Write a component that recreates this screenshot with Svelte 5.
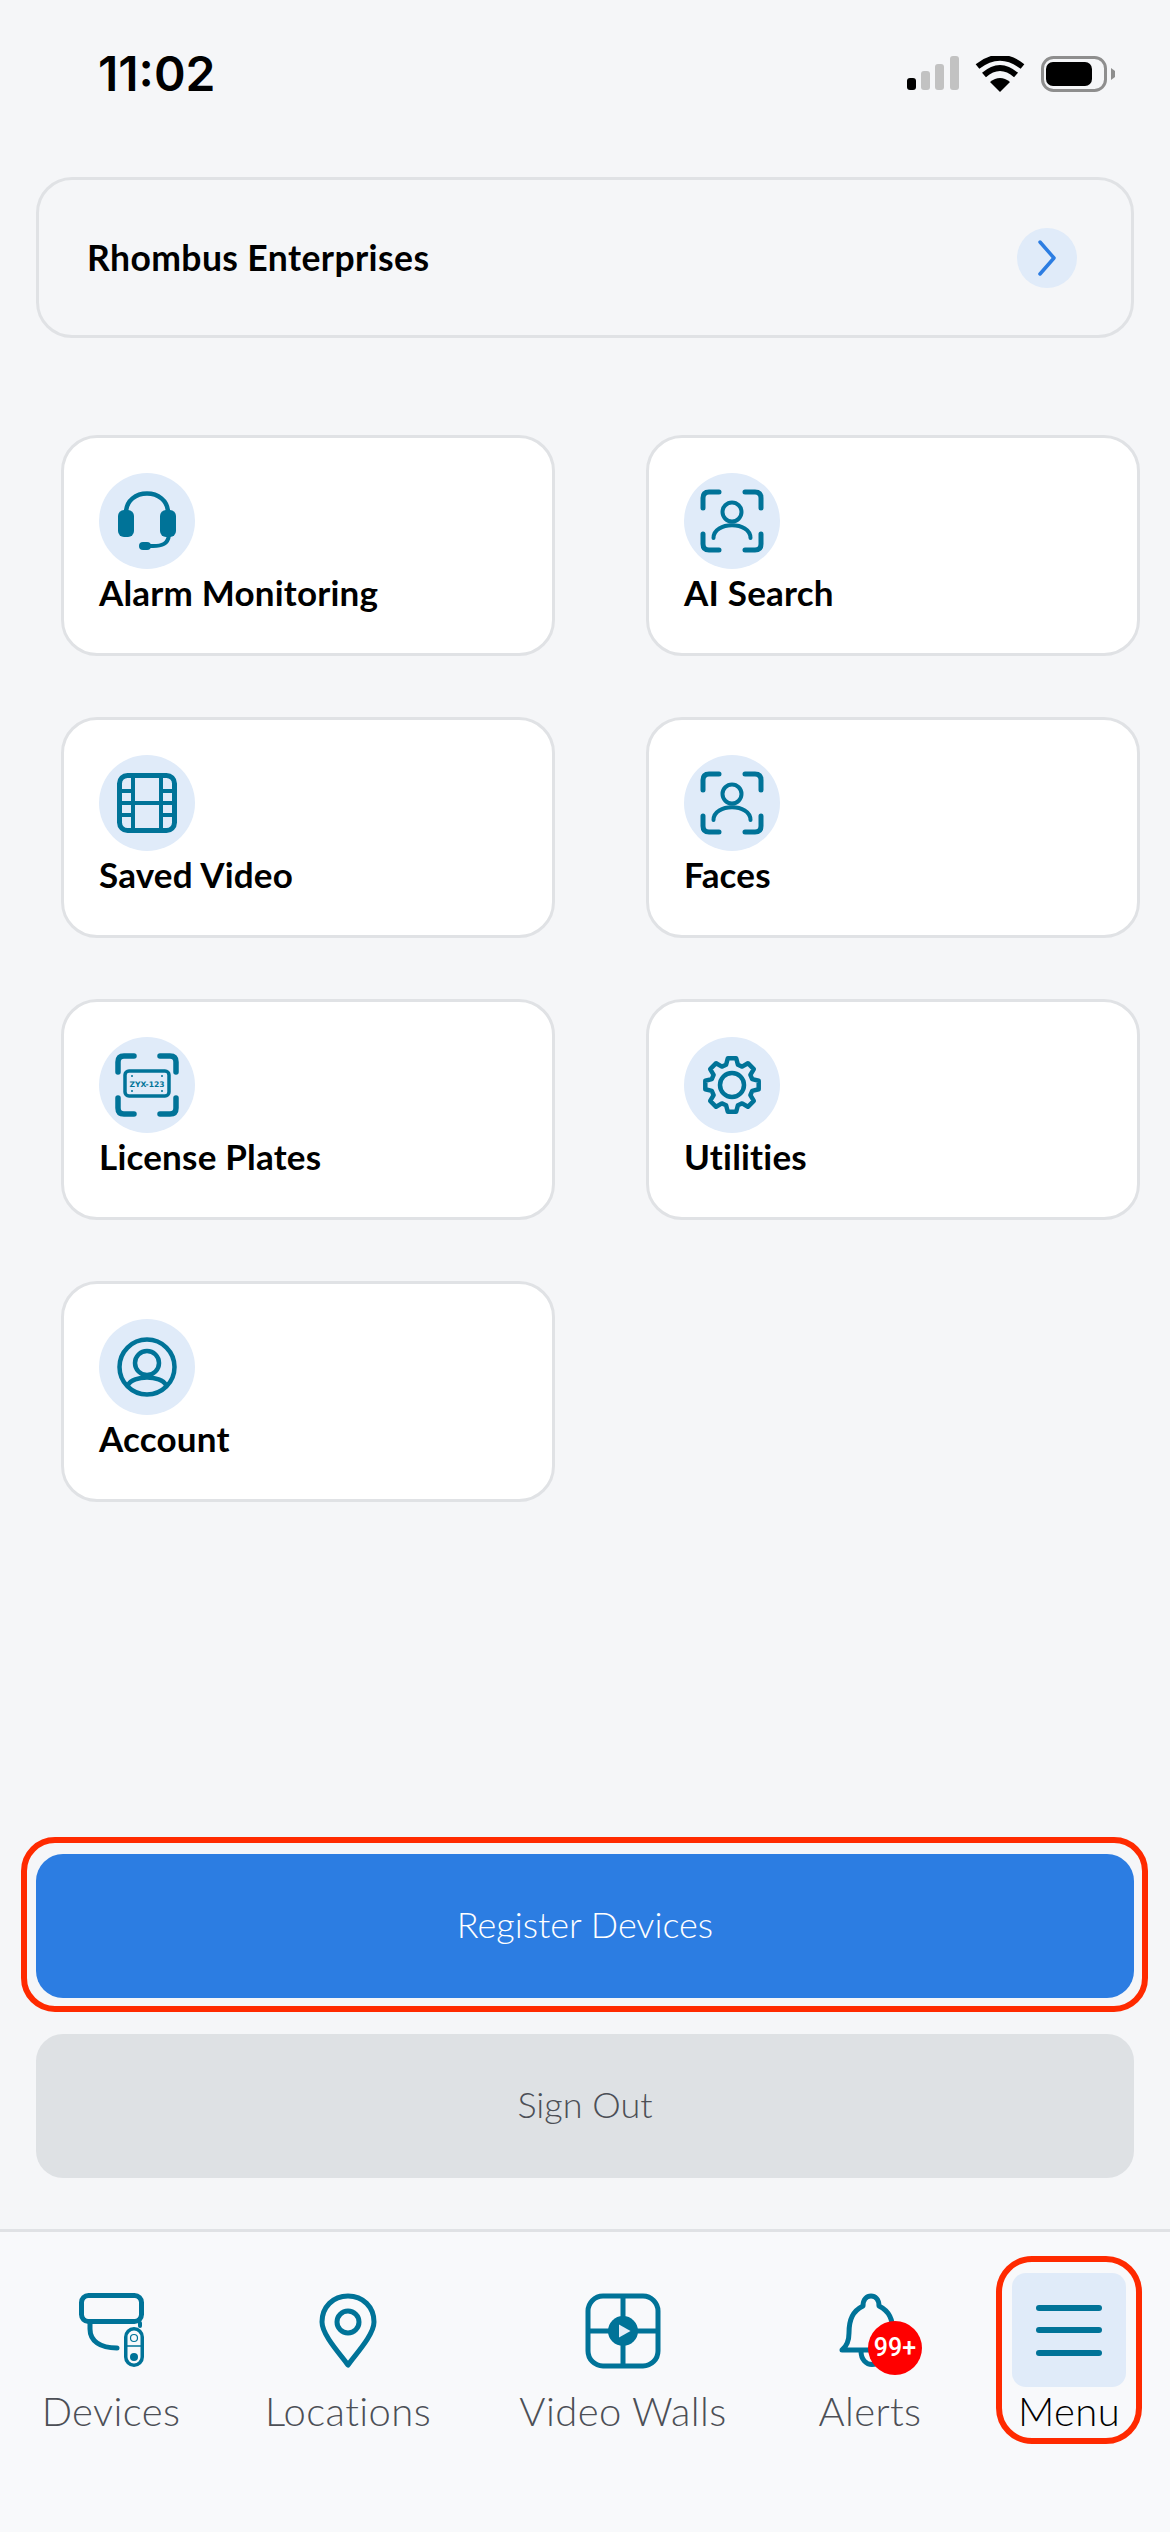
<script>
	const tiles = [
		{ label: 'Alarm Monitoring', icon: 'headset' },
		{ label: 'AI Search', icon: 'face' },
		{ label: 'Saved Video', icon: 'film' },
		{ label: 'Faces', icon: 'face' },
		{ label: 'License Plates', icon: 'plate' },
		{ label: 'Utilities', icon: 'gear' },
		{ label: 'Account', icon: 'account' }
	];

	// gear outline, built once instead of hand-typing eight teeth
	function gearPath(cx, cy, outer, inner, teeth) {
		const step = (Math.PI * 2) / teeth;
		let d = '';
		for (let i = 0; i < teeth; i++) {
			const a = i * step - Math.PI / 2;
			const pts = [
				[inner, a - step * 0.36],
				[outer, a - step * 0.2],
				[outer, a + step * 0.2],
				[inner, a + step * 0.36]
			];
			for (const [r, t] of pts) {
				const x = (cx + r * Math.cos(t)).toFixed(1);
				const y = (cy + r * Math.sin(t)).toFixed(1);
				d += (d ? 'L' : 'M') + x + ' ' + y + ' ';
			}
		}
		return d + 'Z';
	}
</script>

<div class="screen">
	<div class="status">
		<span class="time">11:02</span>
		<div class="status-icons">
			<svg width="52" height="36" viewBox="0 0 52 36">
				<rect x="0" y="22" width="9" height="12" rx="3" fill="#000" />
				<rect x="14" y="15" width="9" height="19" rx="3" fill="#c2c2c2" />
				<rect x="28" y="8" width="9" height="26" rx="3" fill="#c2c2c2" />
				<rect x="43" y="0" width="9" height="34" rx="3" fill="#c2c2c2" />
			</svg>
			<svg width="50" height="37" viewBox="0 0 50 37">
				<path d="M25 36 L15 26 Q25 18 35 26 Z" fill="#000" />
				<path d="M9 19 Q25 5 41 19" fill="none" stroke="#000" stroke-width="6" />
				<path d="M2.5 10.5 Q25 -7 47.5 10.5" fill="none" stroke="#000" stroke-width="6" />
			</svg>
			<svg width="74" height="36" viewBox="0 0 74 36">
				<rect x="1.5" y="1.5" width="63" height="33" rx="11" fill="none" stroke="#8e8e8e" stroke-width="3" />
				<rect x="5" y="6" width="46" height="24" rx="7" fill="#000" />
				<path d="M70 12 L74 15 V21 L70 24 Z" fill="#8e8e8e" />
			</svg>
		</div>
	</div>

	<div class="org">
		<span>Rhombus Enterprises</span>
		<span class="org-chevron">
			<svg width="20" height="36" viewBox="0 0 20 36">
				<path d="M3 2 L17 18 L3 34" fill="none" stroke="#2c7de2" stroke-width="3.5" stroke-linecap="round" stroke-linejoin="round" />
			</svg>
		</span>
	</div>

	<div class="grid">
		{#each tiles as tile}
			<div class="tile">
				<span class="tile-icon">
					<svg width="64" height="64" viewBox="0 0 64 64" fill="none" stroke="#007398" stroke-width="4" stroke-linecap="round" stroke-linejoin="round">
						{#if tile.icon === 'headset'}
							<path d="M11 24 C11 -2 53 -2 53 24" stroke-width="4.5" />
							<rect x="3" y="21" width="16" height="27" rx="6" fill="#007398" stroke="none" />
							<rect x="45" y="21" width="16" height="27" rx="6" fill="#007398" stroke="none" />
							<path d="M54 46 C53 55 47 57 38 57 L27 57" stroke-width="4" />
							<rect x="24" y="53" width="12" height="8" rx="4" fill="#007398" stroke="none" />
						{:else if tile.icon === 'film'}
							<rect x="4.5" y="4.5" width="55" height="55" rx="8" stroke-width="5" />
							<path d="M18 4 V60 M46 4 V60 M18 32 H46 M4 20 H18 M4 32 H18 M4 44 H18 M46 20 H60 M46 32 H60 M46 44 H60" stroke-width="4" stroke-linecap="butt" />
						{:else if tile.icon === 'face'}
							<path d="M3 19 V9 Q3 3 9 3 H19 M45 3 H55 Q61 3 61 9 V19 M3 45 V55 Q3 61 9 61 H19 M45 61 H55 Q61 61 61 55 V45" stroke-width="5" />
							<circle cx="32" cy="23" r="9.5" />
							<path d="M13.5 49 C13.5 32 50.5 32 50.5 49" />
						{:else if tile.icon === 'plate'}
							<path d="M3 19 V9 Q3 3 9 3 H19 M45 3 H55 Q61 3 61 9 V19 M3 45 V55 Q3 61 9 61 H19 M45 61 H55 Q61 61 61 55 V45" stroke-width="5.5" />
							<rect x="10" y="18" width="44" height="25" rx="4" stroke-width="3.5" />
							<text x="32" y="33.5" text-anchor="middle" class="plate-text">ZYX-123</text>
							<g fill="#007398" stroke="none">
								<circle cx="17" cy="23" r="1" />
								<circle cx="47" cy="23" r="1" />
								<circle cx="17" cy="38" r="1" />
								<circle cx="47" cy="38" r="1" />
							</g>
						{:else if tile.icon === 'gear'}
							<path d={gearPath(32, 32, 27, 21, 8)} stroke-width="4.5" />
							<circle cx="32" cy="32" r="12" stroke-width="4.5" />
						{:else if tile.icon === 'account'}
							<circle cx="32" cy="32" r="27.5" stroke-width="4.5" />
							<circle cx="32" cy="28" r="12" stroke-width="4.5" />
							<path d="M13 50 C18 40 46 40 51 50" stroke-width="4.5" />
						{/if}
					</svg>
				</span>
				<span class="tile-label">{tile.label}</span>
			</div>
		{/each}
	</div>

	<div class="actions">
		<button class="btn btn-primary">Register Devices<span class="mark mark-register"></span></button>
		<button class="btn btn-muted">Sign Out</button>
	</div>

	<nav class="tabs">
		<div class="tab">
			<svg class="tab-icon" width="70" height="76" viewBox="0 0 70 76" fill="none" stroke="#007398" stroke-width="5" stroke-linecap="round">
				<rect x="5.5" y="2.5" width="60" height="26" rx="7" />
				<path d="M14 30 V36 C14 48 24 55 41 55" />
				<path d="M64 30 V33" stroke-width="4" />
				<rect x="49.75" y="35.75" width="16.5" height="36.5" rx="8.2" stroke-width="3.5" />
				<path d="M50 53 H66" stroke-width="1.5" />
				<circle cx="58" cy="45" r="3.5" stroke-width="1.2" />
				<circle cx="58" cy="64" r="4" fill="#007398" stroke="none" />
			</svg>
			<span>Devices</span>
		</div>
		<div class="tab">
			<svg class="tab-icon" width="58" height="76" viewBox="0 0 58 76" fill="none" stroke="#007398" stroke-width="5" stroke-linejoin="round">
				<path d="M29 72 C22 62 3 42 3 29 C3 14 14 3 29 3 C44 3 55 14 55 29 C55 42 36 62 29 72 Z" />
				<circle cx="29" cy="29" r="11" />
			</svg>
			<span>Locations</span>
		</div>
		<div class="tab">
			<svg class="tab-icon" width="76" height="76" viewBox="0 0 76 76" fill="none" stroke="#007398" stroke-width="5">
				<rect x="3" y="3" width="70" height="70" rx="15" />
				<path d="M38 3 V73 M3 38 H73" />
				<circle cx="38" cy="38" r="15" fill="#007398" stroke="none" />
				<path d="M34 31.5 L45.5 38 L34 44.5 Z" fill="#e3edf8" stroke="none" />
			</svg>
			<span>Video Walls</span>
		</div>
		<div class="tab">
			<span class="bell">
				<svg class="tab-icon" width="62" height="76" viewBox="0 0 62 76" fill="none" stroke="#007398" stroke-width="5" stroke-linejoin="round" stroke-linecap="round">
					<path d="M3 57 C8 53 10 48 10 40 C10 26 14 18 24 13 C24 6 28 3 32 3 C36 3 40 6 40 13 C50 18 54 26 54 40 C54 48 56 53 61 57 Z" />
					<path d="M22 58 C22 76 44 76 44 58" />
				</svg>
				<span class="badge">99+</span>
			</span>
			<span>Alerts</span>
		</div>
		<div class="tab tab-active">
			<span class="menu-box">
				<span class="menu-line"></span>
				<span class="menu-line"></span>
				<span class="menu-line"></span>
			</span>
			<span>Menu</span>
			<span class="mark mark-menu"></span>
		</div>
	</nav>
</div>

<style>
	:global(body) {
		margin: 0;
		background: #f5f6f8;
	}

	.screen {
		display: flex;
		flex-direction: column;
		width: 1170px;
		height: 2532px;
		background: #f5f6f8;
		font-family: Lato, 'Noto Sans', sans-serif;
		color: #000;
		overflow: hidden;
	}

	.status {
		display: flex;
		align-items: center;
		justify-content: space-between;
		height: 36px;
		padding: 56px 55px 0 98px;
	}

	.time {
		font: 600 48px/38px Inter, sans-serif;
	}

	.status-icons {
		display: flex;
		align-items: center;
		gap: 16px;
	}

	.org {
		display: flex;
		align-items: center;
		justify-content: space-between;
		box-sizing: border-box;
		height: 161px;
		margin: 85px 36px 0;
		padding: 0 54px 0 48px;
		border: 3px solid #e0e2e5;
		border-radius: 36px;
		font-size: 35.5px;
		letter-spacing: 0.4px;
		font-weight: 700;
	}

	.org-chevron {
		display: flex;
		align-items: center;
		justify-content: center;
		width: 60px;
		height: 60px;
		border-radius: 50%;
		background: #e0ebf9;
	}

	.grid {
		display: grid;
		grid-template-columns: 494px 494px;
		grid-auto-rows: 221px;
		column-gap: 91px;
		row-gap: 61px;
		margin: 97px 0 0 61px;
		height: 1419px;
	}

	.tile {
		display: flex;
		flex-direction: column;
		align-items: flex-start;
		box-sizing: border-box;
		padding: 35px 35px 0;
		background: #fff;
		border: 3px solid #e0e2e5;
		border-radius: 36px;
	}

	.tile-icon {
		display: flex;
		align-items: center;
		justify-content: center;
		width: 96px;
		height: 96px;
		border-radius: 50%;
		background: #e0ebf9;
	}

	.tile-label {
		margin-top: 1px;
		font-size: 35px;
		letter-spacing: 0.2px;
		line-height: 44px;
		font-weight: 700;
	}

	.plate-text {
		font: 700 7.6px 'DejaVu Sans', sans-serif;
		fill: #007398;
		stroke: none;
	}

	.actions {
		display: flex;
		flex-direction: column;
		gap: 36px;
		margin: 0 36px;
	}

	.btn {
		position: relative;
		height: 144px;
		padding: 0 0 5px;
		border: none;
		border-radius: 27px;
		font-family: inherit;
		font-size: 36px;
		font-weight: 300;
	}

	.btn-primary {
		background: #2c7de2;
		color: #fff;
	}

	.btn-muted {
		background: #dee1e4;
		color: #4c4f56;
	}

	/* red annotation rings that sit over the screenshot */
	.mark {
		position: absolute;
		box-sizing: border-box;
		border: 6px solid #ff2a00;
		pointer-events: none;
	}

	.mark-register {
		inset: -17px -14px -14px -15px;
		border-radius: 34px;
	}

	.mark-menu {
		top: -37px;
		left: -16px;
		width: 146px;
		height: 188px;
		border-radius: 36px;
	}

	.tabs {
		display: grid;
		grid-template-columns: 222px 252px 298px 196px 202px;
		box-sizing: border-box;
		height: 303px;
		margin-top: 51px;
		padding-top: 61px;
		background: #f8f9fb;
		border-top: 3px solid #e0e2e5;
	}

	.tab {
		position: relative;
		display: flex;
		flex-direction: column;
		align-items: center;
		font-size: 40px;
		letter-spacing: 0.4px;
		font-weight: 300;
		line-height: 50px;
		color: #4c4f56;
		white-space: nowrap;
		width: max-content;
		justify-self: center;
		height: 160px;
	}

	.tab-icon {
		display: block;
		height: 76px;
		margin-bottom: 17px;
		flex: none;
	}

	.bell {
		position: relative;
		display: block;
	}

	.badge {
		position: absolute;
		top: 28px;
		left: 29px;
		width: 54px;
		height: 54px;
		border-radius: 50%;
		background: #ff0000;
		color: #fff;
		font: 500 25px/54px Roboto, sans-serif;
		letter-spacing: 0;
		text-align: center;
	}

	.tab-active {
		color: #000;
	}

	.menu-box {
		display: flex;
		flex-direction: column;
		align-items: center;
		justify-content: center;
		gap: 16.5px;
		flex: none;
		width: 114px;
		height: 114px;
		margin: -20px 0 -1px;
		border-radius: 14px;
		background: #e0ebf9;
	}

	.menu-line {
		width: 66px;
		height: 6px;
		border-radius: 3px;
		background: #007398;
	}
</style>
